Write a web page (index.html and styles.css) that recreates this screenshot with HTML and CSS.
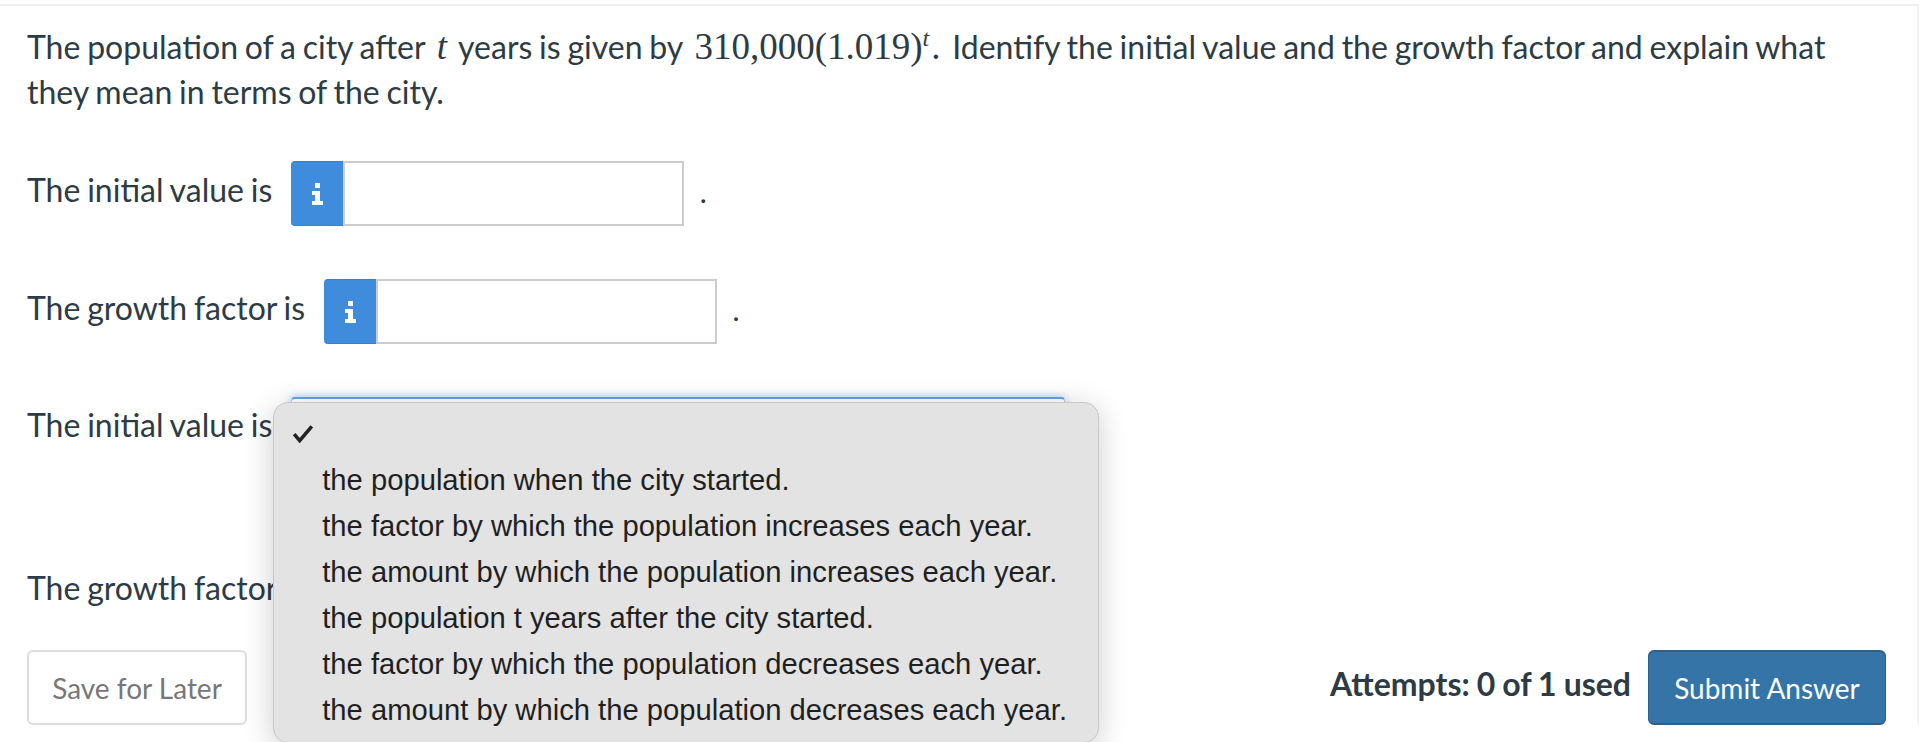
FILE: index.html
```html
<!DOCTYPE html>
<html lang="en">
<head>
    <meta charset="UTF-8">
    <title>Question</title>
    <link rel="stylesheet" href="styles.css">
</head>
<body>
    <div class="question">
        <p class="prompt">The population of a city after <span class="math var">t</span> years is given by <span class="math">310,000(1.019)<sup class="var">t</sup><span class="math-end">.</span></span> Identify the initial value and the growth factor and explain what they mean in terms of the city.</p>

        <div class="row row-input">
            <span class="label">The initial value is</span>
            <span class="info">
                <svg width="11" height="22" viewBox="0 0 11 22"><path d="M3 0h5v5H3zM0 8h8v10h3v4H0v-4h3v-6H0z" fill="#fff"/></svg>
            </span>
            <span class="answer"></span>
            <span class="dot">.</span>
        </div>

        <div class="row row-input">
            <span class="label">The growth factor is</span>
            <span class="info">
                <svg width="11" height="22" viewBox="0 0 11 22"><path d="M3 0h5v5H3zM0 8h8v10h3v4H0v-4h3v-6H0z" fill="#fff"/></svg>
            </span>
            <span class="answer"></span>
            <span class="dot">.</span>
        </div>

        <div class="row row-select">
            <span class="label">The initial value is</span>
            <div class="select select-open">
                <div class="menu">
                    <div class="menu-item menu-blank">
                        <svg class="check" width="22" height="19" viewBox="0 0 20 17"><path d="M2 9l5 6L18 2" fill="none" stroke="#222" stroke-width="3.2"/></svg>
                    </div>
                    <div class="menu-item">the population when the city started.</div>
                    <div class="menu-item">the factor by which the population increases each year.</div>
                    <div class="menu-item">the amount by which the population increases each year.</div>
                    <div class="menu-item">the population t years after the city started.</div>
                    <div class="menu-item">the factor by which the population decreases each year.</div>
                    <div class="menu-item">the amount by which the population decreases each year.</div>
                </div>
            </div>
        </div>

        <div class="row row-select row-last">
            <span class="label">The growth factor is</span>
            <div class="select"></div>
        </div>

        <div class="footer">
            <button class="btn btn-save">Save for Later</button>
            <div class="submit-group">
                <span class="attempts">Attempts: 0 of 1 used</span>
                <button class="btn btn-submit">Submit Answer</button>
            </div>
        </div>
    </div>
</body>
</html>
```

FILE: styles.css
```css
html, body {
    margin: 0;
    height: 742px;
    overflow: hidden;
    background-color: #fff;
}
body {
    font-family: "Lato", sans-serif;
    font-size: 32px;
    line-height: 44px;
    word-spacing: -1.4px;
    color: #2d3b45;
}
.question {
    margin-top: 4px;
    border-top: 2px solid #eee;
    border-right: 2px solid #f2f2f2;
    margin-right: 5px;
    padding: 18px 31px 0 27px;
}
.prompt {
    margin: 0 0 47px 0;
    line-height: 45px;
}
.math {
    font-family: "Liberation Serif", serif;
    font-size: 37px;
    line-height: 0;
    margin: 0 5px;
}
.math-end {
    margin-left: 2px;
}
.var {
    font-style: italic;
}
sup {
    font-size: 24px;
    line-height: 0;
}
.row {
    display: flex;
    align-items: center;
}
.label {
    padding-bottom: 8px;
}
.row-input {
    height: 65px;
    margin-bottom: 53px;
}
.row-select {
    height: 64px;
    margin-bottom: 99px;
}
.row-last {
    margin-bottom: 26px;
}
.info {
    display: flex;
    align-items: center;
    justify-content: center;
    width: 52px;
    height: 65px;
    box-sizing: border-box;
    margin-left: 19px;
    background-color: #3f8bdc;
    border-top: 1px solid #3a7fc8;
    border-bottom: 1px solid #3a7fc8;
    border-radius: 4px 0 0 4px;
}
.answer {
    width: 341px;
    height: 65px;
    box-sizing: border-box;
    border: 2px solid #ccc;
    background-color: #fff;
}
.dot {
    margin-left: 15px;
    padding-bottom: 3px;
    font-family: "Liberation Serif", serif;
}
.select {
    position: relative;
    width: 774px;
    height: 64px;
    margin-left: 19px;
    box-sizing: border-box;
    border: 1px solid #ccc;
    border-radius: 4px;
    background-color: #fff;
}
.select-open {
    border-top: 2px solid #66a3e4;
    box-shadow: 0 0 8px rgba(102, 163, 228, 0.6);
}
.menu {
    position: absolute;
    z-index: 2;
    top: 3px;
    left: -19px;
    width: 826px;
    height: 341px;
    box-sizing: border-box;
    padding-top: 7px;
    background-color: #e3e3e3;
    border: 1px solid #c8c8c8;
    border-radius: 15px;
    box-shadow: 0 6px 30px rgba(0, 0, 0, 0.2);
    font-family: "Liberation Sans", sans-serif;
    font-size: 29.2px;
    word-spacing: 0;
    color: #1f1f1f;
}
.menu-item {
    height: 46px;
    line-height: 46px;
    padding-left: 48px;
    white-space: nowrap;
}
.menu-blank {
    display: flex;
    align-items: center;
    padding-left: 18px;
    margin-bottom: 1px;
}
.footer {
    display: flex;
    justify-content: space-between;
    align-items: center;
}
.submit-group {
    display: flex;
    align-items: center;
    gap: 17px;
}
.attempts {
    font-weight: 700;
    font-size: 32px;
    word-spacing: -0.8px;
    padding-bottom: 8px;
}
.btn {
    height: 75px;
    box-sizing: border-box;
    font-family: "Lato", sans-serif;
    font-size: 28px;
    border-radius: 6px;
}
.btn-save {
    width: 220px;
    background-color: #fff;
    color: #777;
    border: 2px solid #ddd;
}
.btn-submit {
    width: 238px;
    background-color: #3474a7;
    color: #fff;
    border: 1px solid #2d618b;
    border-top-width: 2px;
    border-bottom-width: 2px;
}
```
